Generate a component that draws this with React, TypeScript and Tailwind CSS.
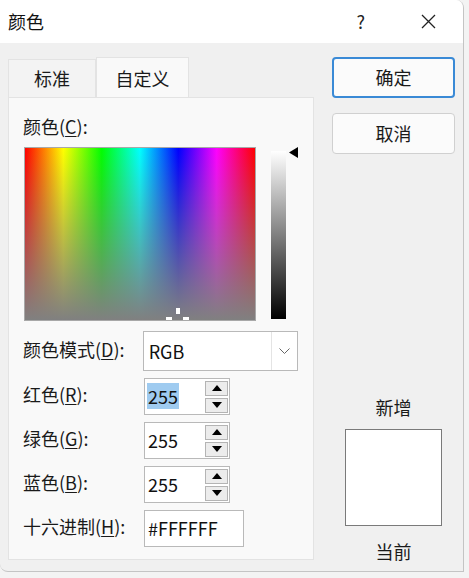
import { ReactNode } from 'react'

const font = "font-['Noto_Sans_CJK_SC','Noto_Sans',sans-serif]"

// Label with an underlined access key, e.g. 颜色(C):
function KeyLabel({ text, hotkey }: { text: string; hotkey: string }) {
  return (
    <span className="text-[18px] leading-[24px] text-[#1a1a1a]">
      {text}(<span className="underline underline-offset-2">{hotkey}</span>):
    </span>
  )
}

function Arrow({ up }: { up?: boolean }) {
  return (
    <svg width="10" height="6" viewBox="0 0 10 6">
      {up ? <path d="M0 6 L5 0 L10 6 Z" fill="#000" /> : <path d="M0 0 L5 6 L10 0 Z" fill="#000" />}
    </svg>
  )
}

function SpinBox({ value, selected }: { value: string; selected?: boolean }) {
  return (
    <div className="flex h-[37px] w-[86px] items-center border border-[#b9b9b9] bg-white pl-[2px] pr-[1px]">
      <div className="flex-1">
        <span
          className={`px-[1px] text-[18px] leading-[24px] text-[#111] ${selected ? 'bg-[#9fcbf0]' : ''}`}
        >
          {value}
        </span>
      </div>
      <div className="flex flex-col gap-[2px]">
        <div className="flex h-[15px] w-[23px] items-center justify-center border border-[#b4b4b4] bg-[#ececec]">
          <Arrow up />
        </div>
        <div className="flex h-[15px] w-[23px] items-center justify-center border border-[#b4b4b4] bg-[#ececec]">
          <Arrow />
        </div>
      </div>
    </div>
  )
}

function Row({ label, children }: { label: ReactNode; children: ReactNode }) {
  return (
    <div className="flex items-center">
      <div className="-ml-[1px] -mt-[4px] w-[121px]">{label}</div>
      {children}
    </div>
  )
}

function DialogButton({ children, primary }: { children: ReactNode; primary?: boolean }) {
  return (
    <button
      className={`h-[41px] w-[123px] rounded-[4px] bg-[#fbfbfb] text-[18px] text-[#1a1a1a] ${
        primary ? 'border-2 border-[#3a8ad6]' : 'border border-[#d0d0d0]'
      }`}
    >
      {children}
    </button>
  )
}

export default function App() {
  return (
    <div className={`h-[578px] w-[469px] bg-[#f3f3f3] ${font}`}>
      <div className="flex h-[572px] w-[464px] flex-col overflow-hidden rounded-tr-[8px] rounded-bl-[8px] border-r border-b border-[#c4c4c4] bg-[#f0f0f0]">
        {/* title bar */}
        <div className="flex h-[43px] shrink-0 items-center bg-white pl-[8px]">
          <span className="text-[18px] text-[#111]">颜色</span>
          <span className="ml-auto mr-[56px] text-[18px] text-[#222]">?</span>
          <svg width="15" height="15" viewBox="0 0 15 15" className="mr-[27px]">
            <path d="M1 1 L14 14 M14 1 L1 14" stroke="#222" strokeWidth="1.3" />
          </svg>
        </div>

        <div className="flex flex-1">
          {/* left: tabs */}
          <div className="flex flex-col pl-[8px] pt-[14px]">
            <div className="flex h-[40px] items-end">
              <div className="flex h-[38px] w-[88px] items-center justify-center border border-b-0 border-[#e3e3e3] bg-[#f3f3f3] text-[18px] text-[#1a1a1a]">
                标准
              </div>
              <div className="-mb-[1px] flex h-[41px] w-[93px] items-center justify-center border border-b-0 border-[#e3e3e3] bg-[#f9f9f9] text-[18px] text-[#1a1a1a]">
                自定义
              </div>
            </div>
            <div className="flex h-[463px] w-[306px] flex-col border border-[#e3e3e3] bg-[#f9f9f9] px-[15px] pt-[16px]">
              <div className="-ml-[1px] flex h-[24px]">
                <KeyLabel text="颜色" hotkey="C" />
              </div>
              <div className="mt-[9px] flex">
                <div className="relative h-[174px] w-[232px] border border-[#a8a8a8] bg-[linear-gradient(to_right,#ff0000,#ffff00,#00ff00,#00ffff,#0000ff,#ff00ff,#ff0000)]">
                  <div className="absolute inset-0 bg-[linear-gradient(to_bottom,rgba(128,128,128,0),#808080)]" />
                  {/* crosshair cursor */}
                  <div className="absolute left-[151px] top-[160px] h-[6px] w-[4px] bg-white" />
                  <div className="absolute left-[141px] top-[169px] h-[3px] w-[6px] bg-white" />
                  <div className="absolute left-[158px] top-[169px] h-[3px] w-[6px] bg-white" />
                </div>
                <div className="ml-[15px] mt-[4px] h-[168px] w-[15px] bg-[linear-gradient(to_bottom,#ffffff,#000000)]" />
                <svg width="9" height="11" viewBox="0 0 9 11" className="ml-[3px]">
                  <path d="M0 5.5 L9 0 L9 11 Z" fill="#000" />
                </svg>
              </div>

              <div className="mt-[10px] flex flex-col gap-[7px]">
                <Row label={<KeyLabel text="颜色模式" hotkey="D" />}>
                  <div className="flex h-[40px] w-[157px] items-center border border-[#b9b9b9] bg-white">
                    <span className="flex-1 pl-[5px] text-[18px] text-[#111]">RGB</span>
                    <div className="flex h-full w-[26px] items-center justify-center border-l border-[#e4e4e4]">
                      <svg width="11" height="7" viewBox="0 0 11 7">
                        <path d="M0.5 0.5 L5.5 5.5 L10.5 0.5" stroke="#666" fill="none" strokeWidth="1" />
                      </svg>
                    </div>
                  </div>
                </Row>
                <Row label={<KeyLabel text="红色" hotkey="R" />}>
                  <SpinBox value="255" selected />
                </Row>
                <Row label={<KeyLabel text="绿色" hotkey="G" />}>
                  <SpinBox value="255" />
                </Row>
                <Row label={<KeyLabel text="蓝色" hotkey="B" />}>
                  <SpinBox value="255" />
                </Row>
                <Row label={<KeyLabel text="十六进制" hotkey="H" />}>
                  <div className="flex h-[37px] w-[100px] items-center border border-[#b9b9b9] bg-white pl-[3px] text-[18px] text-[#111]">
                    #FFFFFF
                  </div>
                </Row>
              </div>
            </div>
          </div>

          {/* right: buttons and preview */}
          <div className="ml-[18px] flex w-[123px] flex-col items-center pt-[14px]">
            <DialogButton primary>确定</DialogButton>
            <div className="mt-[15px]">
              <DialogButton>取消</DialogButton>
            </div>
            <span className="mt-[240px] text-[18px] leading-[26px] text-[#1a1a1a]">新增</span>
            <div className="mt-[9px] h-[97px] w-[97px] border border-[#7a7a7a] bg-white" />
            <span className="mt-[12px] text-[18px] leading-[26px] text-[#1a1a1a]">当前</span>
          </div>
        </div>
      </div>
    </div>
  )
}
